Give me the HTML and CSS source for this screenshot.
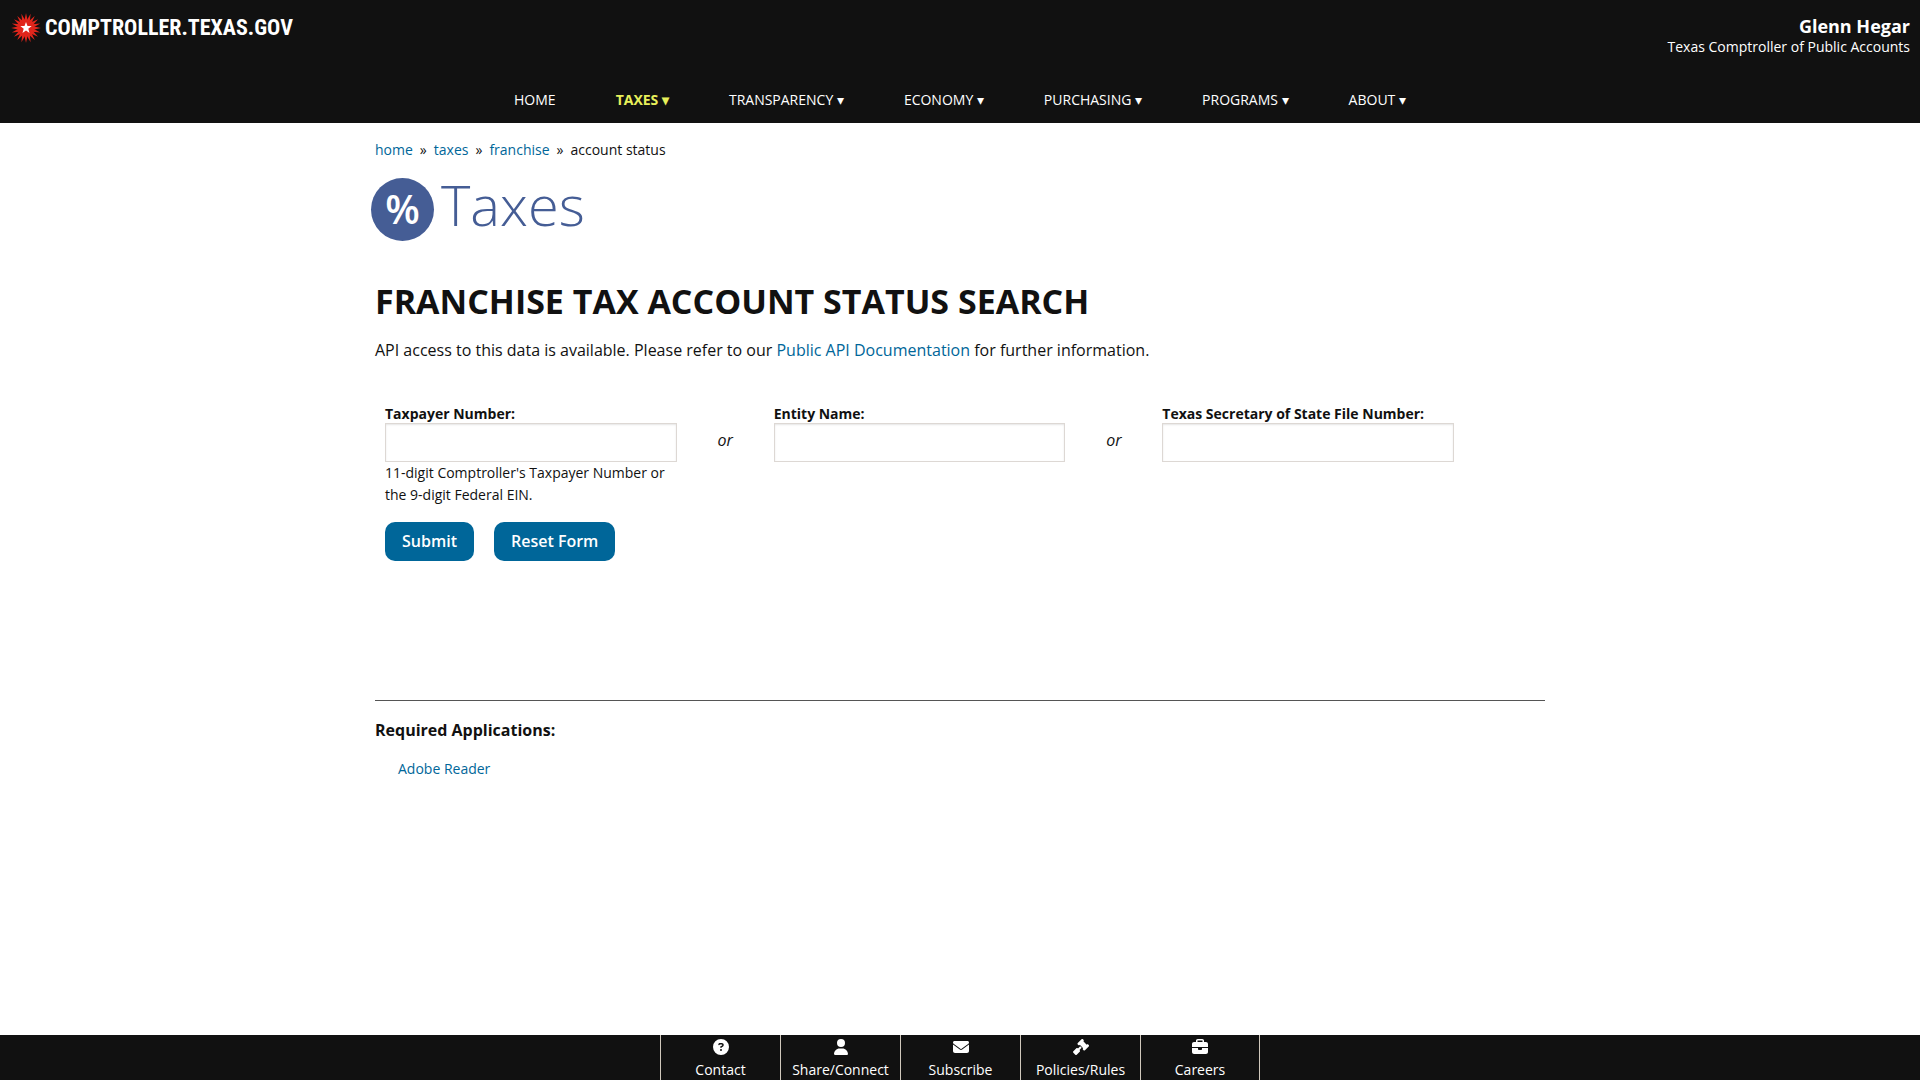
FILE: index.html
```html
<!DOCTYPE html>
<html lang="en">
<head>
<meta charset="utf-8">
<title>Franchise Tax Account Status Search</title>
<meta name="viewport" content="width=device-width, initial-scale=1">
<link rel="stylesheet" href="styles.css">
</head>
<body>
<header class="site-header">
  <div class="brand-bar">
    <a class="brand" href="#">
      <svg class="brand-star" viewBox="-15 -15 30 30" aria-hidden="true">
        <defs><path id="ray" d="M0-14.900 1.700-7V7L0 14.900-1.700 7V-7z"/></defs>
        <g fill="#e1261c">
          <circle r="8.200"/>
          <use href="#ray"/>
          <use href="#ray" transform="rotate(18)"/>
          <use href="#ray" transform="rotate(36)"/>
          <use href="#ray" transform="rotate(54)"/>
          <use href="#ray" transform="rotate(72)"/>
          <use href="#ray" transform="rotate(90)"/>
          <use href="#ray" transform="rotate(108)"/>
          <use href="#ray" transform="rotate(126)"/>
          <use href="#ray" transform="rotate(144)"/>
          <use href="#ray" transform="rotate(162)"/>
        </g>
        <path fill="#fff" d="M0-6 1.500-1.900 5.700-1.900 2.300.8 3.500 4.900 0 2.500-3.500 4.900-2.300.8-5.700-1.900-1.500-1.900z"/>
      </svg>
      <span class="brand-name">COMPTROLLER.TEXAS.GOV</span>
    </a>
    <div class="official">
      <strong class="official-name">Glenn Hegar</strong>
      <span>Texas Comptroller of Public Accounts</span>
    </div>
  </div>
  <nav class="main-nav" aria-label="Main">
    <a href="#">HOME</a>
    <a class="active" href="#">TAXES ▾</a>
    <a href="#">TRANSPARENCY ▾</a>
    <a href="#">ECONOMY ▾</a>
    <a href="#">PURCHASING ▾</a>
    <a href="#">PROGRAMS ▾</a>
    <a href="#">ABOUT ▾</a>
  </nav>
</header>

<main class="content">
  <nav class="breadcrumbs" aria-label="Breadcrumb">
    <a href="#">home</a><span>»</span><a href="#">taxes</a><span>»</span><a href="#">franchise</a><span>»</span>account status
  </nav>
  <div class="section-title">
    <span class="badge">%</span>
    <span class="section-name">Taxes</span>
  </div>
  <h1>FRANCHISE TAX ACCOUNT STATUS SEARCH</h1>
  <p class="intro">API access to this data is available. Please refer to our <a href="#">Public API Documentation</a> for further information.</p>

  <form class="search">
    <div class="fields">
      <div class="field">
        <label for="taxpayer">Taxpayer Number:</label>
        <input id="taxpayer" type="text" aria-describedby="taxpayer-help">
        <p class="help" id="taxpayer-help">11-digit Comptroller's Taxpayer Number or the 9-digit Federal EIN.</p>
      </div>
      <em class="or">or</em>
      <div class="field">
        <label for="entity">Entity Name:</label>
        <input id="entity" type="text">
      </div>
      <em class="or">or</em>
      <div class="field">
        <label for="filenum">Texas Secretary of State File Number:</label>
        <input id="filenum" type="text">
      </div>
    </div>
    <div class="actions">
      <button type="submit">Submit</button>
      <button type="reset">Reset Form</button>
    </div>
  </form>

  <section class="required">
    <h2>Required Applications:</h2>
    <a href="#">Adobe Reader</a>
  </section>
</main>

<footer class="site-footer">
  <a href="#">
    <svg viewBox="0 0 512 512" aria-hidden="true"><path d="M256 512A256 256 0 1 0 256 0a256 256 0 1 0 0 512zM169.800 165.300c7.900-22.300 29.100-37.300 52.800-37.300h58.300c34.900 0 63.100 28.300 63.100 63.100 0 22.600-12.100 43.500-31.700 54.800L280 264.400c-.2 13-10.900 23.600-24 23.600-13.300 0-24-10.700-24-24v-13.500c0-8.600 4.600-16.500 12.100-20.800l44.300-25.400c4.700-2.700 7.600-7.700 7.600-13.100 0-8.400-6.800-15.100-15.100-15.100h-58.300c-3.400 0-6.400 2.100-7.500 5.300l-.4 1.200c-4.400 12.500-18.200 19-30.600 14.600s-19-18.200-14.600-30.600l.3-1.300zM224 352a32 32 0 1 1 64 0 32 32 0 1 1-64 0z"/></svg>
    <span>Contact</span>
  </a>
  <a href="#">
    <svg viewBox="0 0 448 512" aria-hidden="true"><path d="M224 256A128 128 0 1 0 224 0a128 128 0 1 0 0 256zm-45.700 48C79.800 304 0 383.800 0 482.300 0 498.700 13.300 512 29.700 512h388.600c16.400 0 29.700-13.300 29.700-29.700C448 383.800 368.200 304 269.700 304z"/></svg>
    <span>Share/Connect</span>
  </a>
  <a href="#">
    <svg viewBox="0 0 512 512" aria-hidden="true"><path d="M48 64C21.500 64 0 85.500 0 112c0 15.100 7.100 29.300 19.200 38.400l217.600 163.200c11.400 8.500 27 8.500 38.400 0l217.600-163.200c12.100-9.100 19.200-23.300 19.200-38.400 0-26.500-21.500-48-48-48zM0 176v208c0 35.300 28.700 64 64 64h384c35.300 0 64-28.700 64-64V176L294.400 339.200c-22.800 17.100-54 17.100-76.800 0z"/></svg>
    <span>Subscribe</span>
  </a>
  <a href="#">
    <svg viewBox="0 0 512 512" aria-hidden="true"><path d="M318.600 9.400c-12.500-12.500-32.800-12.500-45.300 0l-120 120c-12.500 12.500-12.500 32.800 0 45.300l16 16c12.500 12.500 32.800 12.500 45.300 0l4-4 106.700 106.700-4 4c-12.500 12.500-12.500 32.800 0 45.300l16 16c12.500 12.500 32.800 12.500 45.300 0l120-120c12.500-12.500 12.500-32.800 0-45.300l-16-16c-12.500-12.500-32.800-12.500-45.300 0l-4 4L330.600 74.600l4-4c12.500-12.500 12.500-32.800 0-45.300zM152.600 297.300c-12.500-12.500-32.800-12.500-45.300 0l-96 96c-12.500 12.500-12.500 32.800 0 45.300l62 62c12.500 12.500 32.800 12.500 45.300 0l96-96c12.500-12.500 12.500-32.800 0-45.300l-7-7L278.600 281.300l-48-48-70.600 70.600z"/></svg>
    <span>Policies/Rules</span>
  </a>
  <a href="#">
    <svg viewBox="0 0 512 512" aria-hidden="true"><path d="M176 56v40h160V56c0-4.400-3.600-8-8-8H184c-4.400 0-8 3.600-8 8zm-48 40V56c0-30.900 25.100-56 56-56h144c30.900 0 56 25.100 56 56v40h64c35.300 0 64 28.700 64 64v96H0v-96c0-35.300 28.700-64 64-64zM512 288v128c0 35.300-28.700 64-64 64H64c-35.300 0-64-28.700-64-64V288h192v32c0 17.700 14.300 32 32 32h64c17.700 0 32-14.300 32-32v-32z"/></svg>
    <span>Careers</span>
  </a>
</footer>
</body>
</html>
```
FILE: styles.css
```css
* { box-sizing: border-box; }

body {
  margin: 0;
  color: #111;
  background: #fff;
  font: 16px/24px "Open Sans", sans-serif;
}

a { color: #069; text-decoration: none; }

/* Header */
.site-header { background: #111; color: #fff; font-size: 14px; }

.brand-bar {
  display: flex;
  justify-content: space-between;
  padding: 12px 10px 0 11px;
}
.brand {
  display: flex;
  align-items: center;
  gap: 4px;
  height: 32px;
  color: #fff;
}
.brand-star { width: 30px; height: 30px; }
.brand-name {
  font: bold 22px/32px "Roboto Condensed", Roboto, sans-serif;
}
.official {
  display: flex;
  flex-direction: column;
  text-align: right;
  line-height: 20px;
  padding-top: 4px;
}
.official-name { font-size: 18px; line-height: 21px; }

.main-nav {
  display: flex;
  flex-wrap: wrap;
  justify-content: center;
  padding: 31px 0 11px;
  line-height: 24px;
}
.main-nav a { padding: 0 30px; color: #fff; }
.main-nav .active { color: #e8f05a; font-weight: 700; }

/* Page content */
.content {
  max-width: 1170px;
  margin: 0 auto;
  padding: 15px 0 60px;
}
.breadcrumbs { font-size: 14px; }
.breadcrumbs span { margin: 0 7px; }

.section-title {
  display: flex;
  align-items: flex-start;
  gap: 7px;
  height: 64px;
  margin: 16px 0 0 -4px;
  color: #455d95;
}
.badge {
  width: 63px;
  height: 63px;
  border-radius: 50%;
  background: #455d95;
  color: #fff;
  font-size: 40px;
  font-weight: 600;
  line-height: 62px;
  text-align: center;
}
.section-name { font-size: 56px; font-weight: 300; line-height: 52px; }

h1 {
  margin: 35px 0 0;
  font-size: 34px;
  font-weight: 700;
  line-height: 48px;
}
.intro { margin: 13px 0 0; }

/* Search form */
.search { padding: 43px 91px 0 10px; }
.fields {
  display: grid;
  grid-template-columns: 1fr 97px 1fr 97px 1fr;
}
.field label {
  display: block;
  font-size: 14px;
  font-weight: 700;
  line-height: 18px;
}
.field input {
  display: block;
  width: 100%;
  height: 39px;
  padding: 8px;
  border: 1px solid #ddd8d4;
  border-radius: 0;
  background: #fff;
  box-shadow: inset 0 1px 2px rgba(0, 0, 0, .1);
  font: inherit;
}
.help { margin: 0; font-size: 14px; line-height: 22px; }
.or { padding-top: 23px; text-align: center; }

.actions { display: flex; gap: 20px; margin-top: 16px; }
.actions button {
  height: 39px;
  padding: 0 17px;
  border: 0;
  border-radius: 10px;
  background: #069;
  color: #fff;
  font: 600 16px/39px "Open Sans", sans-serif;
  cursor: pointer;
}

/* Required applications */
.required {
  margin-top: 139px;
  padding-top: 17px;
  border-top: 1px solid #555;
}
.required h2 { margin: 0 0 14px; font-size: 16px; line-height: 24px; }
.required a { margin-left: 23px; font-size: 14px; }

/* Bar pinned to the bottom of the window */
.site-footer {
  position: fixed;
  right: 0;
  bottom: 0;
  left: 0;
  display: flex;
  justify-content: center;
  background: #111;
}
.site-footer a {
  display: flex;
  flex-direction: column;
  align-items: center;
  gap: 4px;
  width: 120px;
  padding: 4px 0 0;
  border-left: 1px solid #d0c8bc;
  color: #fff;
  font-size: 14px;
  line-height: 21px;
}
.site-footer a:last-child { border-right: 1px solid #d0c8bc; }
.site-footer svg { height: 16px; fill: #fff; }
```
